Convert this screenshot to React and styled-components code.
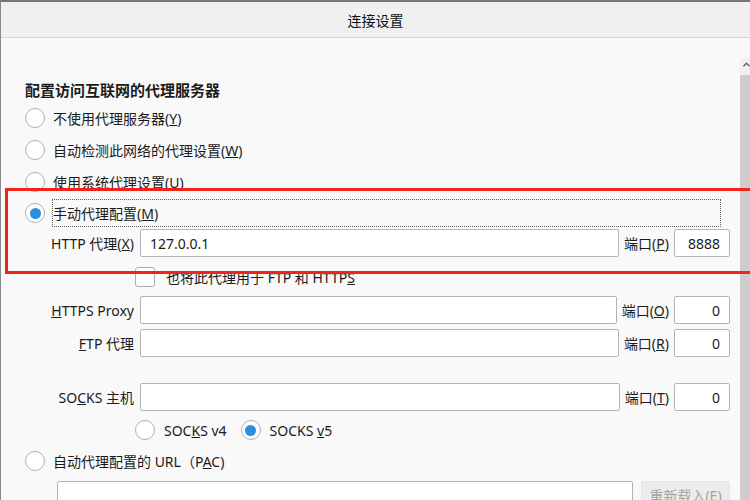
import styled, { createGlobalStyle } from "styled-components";

const GlobalStyle = createGlobalStyle`
  html, body {
    margin: 0;
    padding: 0;
  }
  body {
    width: 750px;
    height: 500px;
    overflow: hidden;
    font-family: "Noto Sans", "Noto Sans CJK SC", sans-serif;
    font-size: 14px;
    color: #1b1b1b;
    background: #f9f9f9;
  }
`;

const Window = styled.div`
  position: relative;
  box-sizing: border-box;
  width: 750px;
  height: 500px;
  border-top: 2px solid #767676;
  border-left: 1px solid #8a8a8a;
  background: #f9f9f9;
  display: flex;
  flex-direction: column;
  overflow: hidden;
`;

const TitleBar = styled.div`
  height: 35px;
  flex-shrink: 0;
  background: #f0f0f0;
  border-bottom: 1px solid #d6d6d6;
  display: flex;
  align-items: center;
  justify-content: center;
  font-size: 14px;
  color: #111;
`;

const Body = styled.div`
  flex: 1;
  min-height: 0;
  display: flex;
`;

const Content = styled.div`
  flex: 1;
  padding: 42px 10px 0 24px;
`;

const Heading = styled.h3`
  margin: 0 0 2px;
  font-size: 15px;
  font-weight: 700;
  line-height: 20px;
`;

const RadioRow = styled.div`
  display: flex;
  align-items: center;
  height: ${(p) => p.$h || 32}px;
  gap: ${(p) => p.$gap ?? 8}px;
  margin-top: ${(p) => p.$mt || 0}px;
  padding-left: ${(p) => p.$indent || 0}px;
  white-space: nowrap;
`;

const Radio = styled.span`
  box-sizing: border-box;
  flex-shrink: 0;
  width: 20px;
  height: 20px;
  border-radius: 50%;
  border: 1px solid #b0b0b0;
  background: #fff;
  display: flex;
  align-items: center;
  justify-content: center;

  &::after {
    content: "";
    display: ${(p) => (p.$checked ? "block" : "none")};
    width: 11px;
    height: 11px;
    border-radius: 50%;
    background: #2a8fdc;
  }
`;

const FocusLabel = styled.span`
  box-sizing: border-box;
  flex: 1;
  height: 28px;
  margin-right: 9px;
  border: 1px dotted #606060;
  display: flex;
  align-items: center;
`;

const FieldRow = styled.div`
  display: flex;
  align-items: center;
  height: 28px;
  margin-top: ${(p) => p.$mt || 0}px;
  white-space: nowrap;
`;

const FieldLabel = styled.span`
  flex-shrink: 0;
  width: 109px;
  margin-right: 6px;
  text-align: right;
`;

const TextInput = styled.input`
  box-sizing: border-box;
  flex: 1;
  min-width: 0;
  height: 28px;
  margin: 0;
  padding: 0 9px;
  border: 1px solid #b4b4b4;
  border-radius: 2px;
  background: #fff;
  font: inherit;
  color: #1b1b1b;
  outline: none;
`;

const PortLabel = styled.span`
  flex-shrink: 0;
  margin: 0 5px 0 5px;
`;

const PortInput = styled(TextInput)`
  flex: 0 0 56px;
  width: 56px;
  text-align: right;
`;

const Checkbox = styled.span`
  box-sizing: border-box;
  flex-shrink: 0;
  width: 20px;
  height: 20px;
  border: 1px solid #acacac;
  border-radius: 3px;
  background: #fff;
`;

const OptionGroup = styled.span`
  display: flex;
  align-items: center;
  gap: 9px;
`;

const UrlRow = styled.div`
  display: flex;
  gap: 8px;
  margin-top: 10px;
  padding-left: 32px;
`;

const ReloadButton = styled.button`
  box-sizing: border-box;
  flex: 0 0 89px;
  height: 28px;
  margin: 0;
  border: 1px solid #e6e6e6;
  border-radius: 2px;
  background: #ececec;
  color: #a3a3a3;
  font: inherit;
  font-size: 14px;
`;

const Scrollbar = styled.div`
  width: 10px;
  flex-shrink: 0;
  margin-top: 20px;
  display: flex;
  flex-direction: column;
`;

const ScrollButton = styled.div`
  height: 17px;
  background: #f0f0f0;
  display: flex;
  justify-content: flex-start;
  padding: 4px 0 0 3px;
  box-sizing: border-box;
`;

const ScrollTrack = styled.div`
  flex: 1;
  background: #cdcdcd;
`;

const Highlight = styled.div`
  position: absolute;
  top: 186px;
  left: 4px;
  width: 748px;
  height: 86px;
  box-sizing: border-box;
  border: 3px solid #f2231b;
  pointer-events: none;
`;

const App = () => {
  return (
    <>
      <GlobalStyle />
      <Window>
        <TitleBar>连接设置</TitleBar>
        <Body>
          <Content>
            <Heading>配置访问互联网的代理服务器</Heading>
            <RadioRow>
              <Radio />
              <span>
                不使用代理服务器(<u>Y</u>)
              </span>
            </RadioRow>
            <RadioRow>
              <Radio />
              <span>
                自动检测此网络的代理设置(<u>W</u>)
              </span>
            </RadioRow>
            <RadioRow $h={31}>
              <Radio />
              <span>
                使用系统代理设置(<u>U</u>)
              </span>
            </RadioRow>
            <RadioRow $gap={7}>
              <Radio $checked />
              <FocusLabel>
                手动代理配置(<u>M</u>)
              </FocusLabel>
            </RadioRow>

            <FieldRow>
              <FieldLabel>
                HTTP 代理(<u>X</u>)
              </FieldLabel>
              <TextInput readOnly value="127.0.0.1" />
              <PortLabel>
                端口(<u>P</u>)
              </PortLabel>
              <PortInput readOnly value="8888" />
            </FieldRow>

            <RadioRow $h={20} $mt={10} $indent={110} $gap={11}>
              <Checkbox />
              <span>
                也将此代理用于 FTP 和 HTTP<u>S</u>
              </span>
            </RadioRow>

            <FieldRow $mt={9}>
              <FieldLabel>
                <u>H</u>TTPS Proxy
              </FieldLabel>
              <TextInput readOnly value="" />
              <PortLabel>
                端口(<u>O</u>)
              </PortLabel>
              <PortInput readOnly value="0" />
            </FieldRow>

            <FieldRow $mt={5}>
              <FieldLabel>
                <u>F</u>TP 代理
              </FieldLabel>
              <TextInput readOnly value="" />
              <PortLabel>
                端口(<u>R</u>)
              </PortLabel>
              <PortInput readOnly value="0" />
            </FieldRow>

            <FieldRow $mt={26}>
              <FieldLabel>
                SO<u>C</u>KS 主机
              </FieldLabel>
              <TextInput readOnly value="" />
              <PortLabel>
                端口(<u>T</u>)
              </PortLabel>
              <PortInput readOnly value="0" />
            </FieldRow>

            <RadioRow $h={20} $mt={9} $indent={110} $gap={14}>
              <OptionGroup>
                <Radio />
                <span>
                  SOC<u>K</u>S v4
                </span>
              </OptionGroup>
              <OptionGroup>
                <Radio $checked />
                <span>
                  SOCKS <u>v</u>5
                </span>
              </OptionGroup>
            </RadioRow>

            <RadioRow $h={20} $mt={11}>
              <Radio />
              <span>
                自动代理配置的 URL（P<u>A</u>C)
              </span>
            </RadioRow>

            <UrlRow>
              <TextInput readOnly value="" />
              <ReloadButton disabled>重新载入(E)</ReloadButton>
            </UrlRow>
          </Content>
          <Scrollbar>
            <ScrollButton>
              <svg width="8" height="5" viewBox="0 0 8 5">
                <path d="M0.5 4.5 L4 1 L7.5 4.5" fill="none" stroke="#606060" strokeWidth="1.6" />
              </svg>
            </ScrollButton>
            <ScrollTrack />
          </Scrollbar>
        </Body>
        <Highlight />
      </Window>
    </>
  );
};

export default App;
